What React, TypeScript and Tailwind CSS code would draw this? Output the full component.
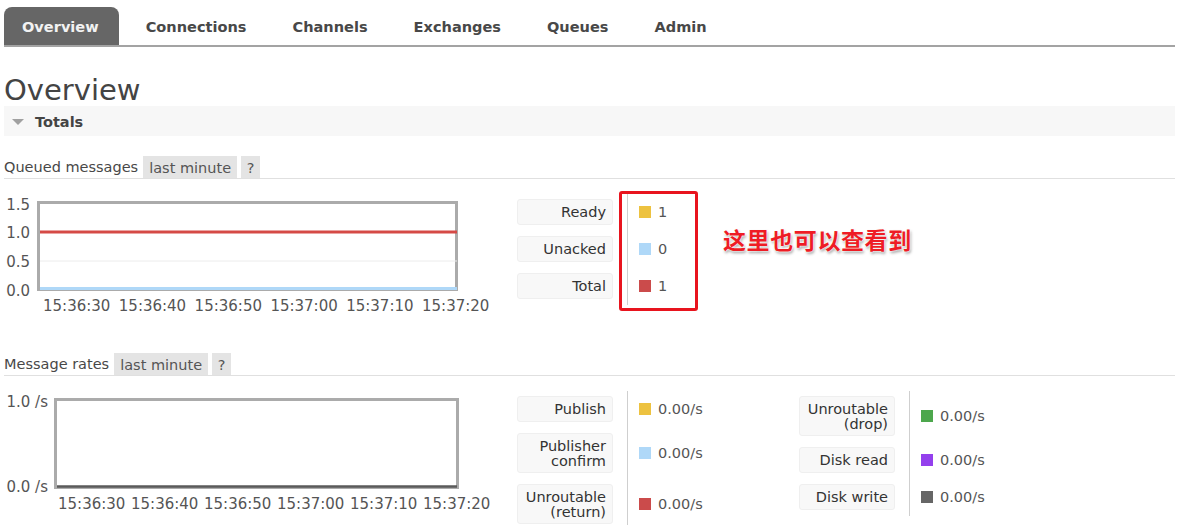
import React from 'react';

const tabs = ['Overview', 'Connections', 'Channels', 'Exchanges', 'Queues', 'Admin'];
const times = ['15:36:30', '15:36:40', '15:36:50', '15:37:00', '15:37:10', '15:37:20'];

type Row = { label: string[]; value: string; color: string; h: string };

const SectionHead = ({ title }: { title: string }) => (
  <div className="flex items-center h-[22px] border-b border-[#e0e0e0] box-content">
    <span className="text-[#484848] mr-[5px] pt-[2px]">{title}</span>
    <span className="bg-[#e4e4e4] text-[#555] px-[6px] h-[22px] leading-[24px]">last minute</span>
    <span className="bg-[#e4e4e4] text-[#555] ml-[4px] w-[19px] h-[22px] leading-[24px] text-center">?</span>
  </div>
);

const Legend = ({ rows, pt, pb, valueWidth, children }: { rows: Row[]; pt: string; pb: string; valueWidth: string; children?: React.ReactNode }) => (
  <div className="flex">
    <div className={`flex flex-col gap-[11px] ${pt} ${pb}`}>
      {rows.map((r, i) => (
        <div key={i} className={`${r.h} w-[96px] flex flex-col justify-center items-end pr-[6px] pt-[1px] bg-[#f8f8f8] border border-[#efefef] rounded-[3px] text-[#333] leading-[15px] text-right`}>
          {r.label.map((l, j) => <span key={j}>{l}</span>)}
        </div>
      ))}
    </div>
    <div className={`relative ml-[14px] border-l border-[#cfcfcf] pl-[11px] flex flex-col gap-[11px] ${pt} ${pb} ${valueWidth}`}>
      {rows.map((r, i) => (
        <div key={i} className={`${r.h} flex items-center gap-[7px] text-[#555]`}>
          <span className="w-[12px] h-[12px] inline-block" style={{ background: r.color }} />
          <span className="pt-[2px]">{r.value}</span>
        </div>
      ))}
      {children}
    </div>
  </div>
);

export default function App() {
  return (
    <div className="w-[1182px] h-[525px] overflow-hidden bg-white pl-[4px] pr-[7px] text-[14.5px] [font-family:'DejaVu_Sans',Verdana,sans-serif]">
      {/* tabs */}
      <div className="flex gap-[9px] pt-[7px] border-b-2 border-[#a3a3a3]">
        {tabs.map((t, i) => (
          <div
            key={t}
            className={`h-[38px] pl-[18px] pr-[19px] pt-[1px] flex items-center text-[14.55px] font-bold rounded-t-[8px] ${i === 0 ? 'bg-[#666] text-[#f2f2f2] pr-[20px]' : 'text-[#484848]'}`}
          >
            {t}
          </div>
        ))}
      </div>

      <h1 className="mt-[28px] text-[29px] leading-[31px] text-[#444]">Overview</h1>

      <div className="h-[30px] bg-[#f7f7f7] flex items-center pl-[8px]">
        <svg width="12" height="8" viewBox="0 0 12 8" className="mr-[11px] mt-[2px]">
          <polygon points="0,1 12,1 6,7" fill="#a0a0a0" />
        </svg>
        <span className="font-bold text-[#444] pt-[3px]">Totals</span>
      </div>

      {/* queued messages */}
      <div className="mt-[20px]">
        <SectionHead title="Queued messages" />
      </div>
      <div className="flex items-start mt-[11px]">
        <svg width="496" height="125" className="shrink-0">
          <rect x="34.5" y="12.5" width="418" height="87" fill="#fff" stroke="#ababab" strokeWidth="3" />
          <line x1="36" x2="453" y1="71" y2="71" stroke="#ececec" strokeWidth="1" />
          <line x1="36" x2="453" y1="42" y2="42" stroke="#d54a46" strokeWidth="3" />
          <line x1="36" x2="453" y1="98.5" y2="98.5" stroke="#afd8f8" strokeWidth="3" />
          <g fill="#555" fontSize="15" fontFamily="DejaVu Sans, sans-serif" textAnchor="end">
            <text x="26" y="20">1.5</text>
            <text x="26" y="48">1.0</text>
            <text x="26" y="77">0.5</text>
            <text x="26" y="106">0.0</text>
          </g>
          <g fill="#555" fontSize="15" fontFamily="DejaVu Sans, sans-serif">
            {times.map((t, i) => (
              <text key={t} x={39 + i * 75.8} y="121">{t}</text>
            ))}
          </g>
        </svg>
        <div className="ml-[17px] mt-[2px]">
          <Legend
            pt="pt-[7px]"
            pb="pb-[6px]"
            valueWidth="w-[70px]"
            rows={[
              { label: ['Ready'], value: '1', color: '#edc240', h: 'h-[26px]' },
              { label: ['Unacked'], value: '0', color: '#afd8f8', h: 'h-[26px]' },
              { label: ['Total'], value: '1', color: '#cb4b4b', h: 'h-[26px]' },
            ]}
          >
            <div className="absolute left-[-9px] top-[-1px] w-[79px] h-[120px] border-[3px] border-[#e8141e] rounded-[3px]" />
          </Legend>
        </div>
        <div className="ml-[26px] mt-[34px] text-[23px] leading-[30px] font-bold tracking-[0.6px] text-[#ee1c25] [font-family:'Noto_Sans_CJK_SC',sans-serif] [text-shadow:0_0_2px_#fff,0_0_2px_#fff,1px_2px_3px_#9a9a9a]">
          这里也可以查看到
        </div>
      </div>

      {/* message rates */}
      <div className="mt-[38px]">
        <SectionHead title="Message rates" />
      </div>
      <div className="flex items-start mt-[10px]">
        <svg width="496" height="130" className="shrink-0">
          <rect x="51.5" y="13.5" width="402" height="88" fill="#fff" stroke="#ababab" strokeWidth="3" />
          <line x1="53" x2="453" y1="100.5" y2="100.5" stroke="#5a5a5a" strokeWidth="2.5" />
          <g fill="#555" fontSize="15" fontFamily="DejaVu Sans, sans-serif" textAnchor="end">
            <text x="44" y="21">1.0 /s</text>
            <text x="44" y="106">0.0 /s</text>
          </g>
          <g fill="#555" fontSize="15" fontFamily="DejaVu Sans, sans-serif">
            {times.map((t, i) => (
              <text key={t} x={54 + i * 73} y="123">{t}</text>
            ))}
          </g>
        </svg>
        <div className="ml-[17px] mt-[5px] flex">
          <Legend
            pt="pt-[5px]"
            pb="pb-[6px]"
            valueWidth="w-[160px]"
            rows={[
              { label: ['Publish'], value: '0.00/s', color: '#edc240', h: 'h-[26px]' },
              { label: ['Publisher', 'confirm'], value: '0.00/s', color: '#afd8f8', h: 'h-[40px]' },
              { label: ['Unroutable', '(return)'], value: '0.00/s', color: '#cb4b4b', h: 'h-[40px]' },
            ]}
          />
          <div className="ml-[12px]">
            <Legend
              pt="pt-[5px]"
              pb="pb-[6px]"
              valueWidth="w-[90px]"
              rows={[
                { label: ['Unroutable', '(drop)'], value: '0.00/s', color: '#4da74d', h: 'h-[40px]' },
                { label: ['Disk read'], value: '0.00/s', color: '#9440ed', h: 'h-[26px]' },
                { label: ['Disk write'], value: '0.00/s', color: '#666666', h: 'h-[26px]' },
              ]}
            />
          </div>
        </div>
      </div>
    </div>
  );
}
